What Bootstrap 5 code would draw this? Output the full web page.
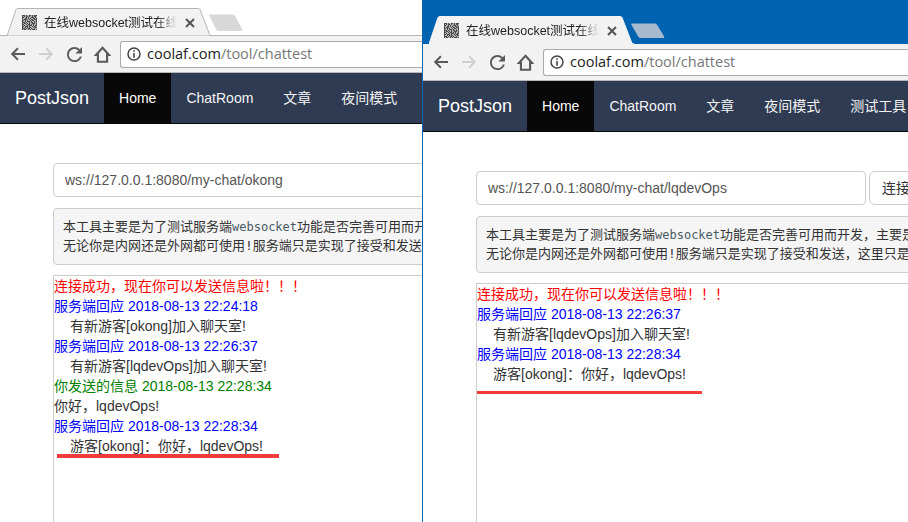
<!DOCTYPE html>
<html lang="zh-CN">
<head>
    <meta charset="UTF-8">
    <meta name="viewport" content="width=device-width, initial-scale=1.0">
    <link href="https://cdn.jsdelivr.net/npm/bootstrap@5.3.2/dist/css/bootstrap.min.css" rel="stylesheet" />
    <script src="https://cdn.jsdelivr.net/npm/bootstrap@5.3.2/dist/js/bootstrap.bundle.min.js"></script>
    <title>在线websocket测试</title>
    <style>
        html, body {
            height: 522px;
            overflow: hidden;
        }
        body {
            font-family: "Liberation Sans", "Noto Sans CJK SC", sans-serif;
            font-size: 14px;
            color: #333;
        }
        .browser-left {
            width: 422px;
            height: 522px;
            flex: none;
        }
        .browser-right {
            width: 486px;
            height: 522px;
            flex: none;
            border-left: 1px solid #0a64b0;
        }
        .tab-strip {
            height: 36px;
            background: #fff;
            border-bottom: 1px solid #b5b5b5;
            padding-left: 7px;
        }
        .browser-right .tab-strip {
            height: 44px;
            background: #0063b1;
            border-bottom: 0;
            padding-left: 6px;
        }
        .tab-item {
            width: 205px;
            height: 28px;
            margin-bottom: -1px;
        }
        .browser-right .tab-item {
            margin-bottom: 0;
        }
        .tab-shape {
            position: absolute;
            left: 0;
            top: 0;
        }
        .browser-right .tab-shape path {
            stroke: #f2f2f2;
        }
        .tab-fav {
            position: relative;
            margin-left: 15px;
            margin-top: 7px;
            width: 15px;
            height: 15px;
            flex: none;
        }
        .tab-title {
            position: relative;
            margin-left: 7px;
            margin-top: 5px;
            width: 133px;
            height: 20px;
            font-size: 12.5px;
            line-height: 20px;
            color: #222;
            white-space: nowrap;
            overflow: hidden;
            -webkit-mask-image: linear-gradient(to right, #000 85%, transparent 100%);
            mask-image: linear-gradient(to right, #000 85%, transparent 100%);
        }
        .tab-close {
            position: relative;
            margin-left: 8px;
            margin-top: 10px;
            flex: none;
        }
        .tab-new {
            margin-left: -3px;
            margin-bottom: 3px;
            flex: none;
        }
        .browser-right .tab-new {
            height: 16px;
            margin-bottom: 5px;
        }
        .browser-right .tab-new path {
            fill: #a5b9cf;
        }
        .tool-bar {
            height: 37px;
            background: #f2f2f2;
            border-bottom: 1px solid #b8b8b8;
            padding-left: 4px;
        }
        .tool-btn {
            width: 28px;
            height: 36px;
            flex: none;
            color: #5a5a5a;
        }
        .tool-btn.is-off {
            color: #cfcfcf;
        }
        .omni-box {
            margin-left: 4px;
            height: 27px;
            flex: 1 0 auto;
            background: #fff;
            border: 1px solid #a9a9a9;
            border-right: 0;
            border-radius: 3px 0 0 3px;
            font-family: "Open Sans", "Liberation Sans", sans-serif;
            font-size: 14.5px;
            color: #222;
            padding-left: 6px;
            white-space: nowrap;
        }
        .omni-box svg {
            margin-right: 6px;
            flex: none;
        }
        .omni-path {
            color: #777;
        }
        .site-nav.navbar {
            height: 51px;
            padding: 0;
            background: #2f3b52;
            border-bottom: 1px solid #080808;
            flex-wrap: nowrap;
            justify-content: flex-start;
        }
        .site-nav .navbar-brand {
            font-size: 18px;
            line-height: 20px;
            color: #fff;
            padding: 15px;
            margin: 0;
        }
        .site-nav .navbar-nav {
            flex-wrap: nowrap;
        }
        .site-nav .nav-link {
            font-size: 14px;
            line-height: 20px;
            padding: 15px !important;
            color: #f4f4f4;
            white-space: nowrap;
        }
        .site-nav .nav-link.active {
            background: #080808;
            color: #fff;
        }
        .tool-body {
            width: 486px;
            padding: 39px 0 0 53px;
        }
        .url-row {
            gap: 3px;
            margin-bottom: 11px;
        }
        .url-input.form-control {
            width: 390px;
            height: 34px;
            flex: none;
            font-family: inherit;
            font-size: 14px;
            color: #555;
            padding: 6px 11px;
            border-color: #ccc;
            border-radius: 4px;
        }
        .conn-btn.btn {
            flex: none;
            height: 34px;
            font-size: 14px;
            color: #333;
            background: #fff;
            border-color: #ccc;
            padding: 6px 12px;
            white-space: nowrap;
        }
        .tool-note {
            width: 640px;
            height: 57px;
            margin: 0 0 10px;
            padding: 8px 9px;
            font-family: "DejaVu Sans Mono", "Noto Sans CJK SC", monospace;
            font-size: 13px;
            line-height: 19px;
            color: #333;
            background: #f5f5f5;
            border: 1px solid #ccc;
            border-radius: 4px;
            overflow: hidden;
            white-space: pre;
        }
        .tool-note code {
            font-family: "DejaVu Sans Mono", monospace;
            font-size: 12px;
            line-height: 1;
            color: #4a5a66;
        }
        .chat-log {
            position: relative;
            width: 640px;
            height: 300px;
            border-top: 1px solid #ccc;
            border-left: 1px solid #ccc;
        }
        .chat-line {
            line-height: 20px;
            height: 20px;
            white-space: nowrap;
        }
        .chat-indent {
            padding-left: 16px;
        }
        .chat-ok { color: #f00; }
        .chat-server { color: #00f; }
        .chat-self { color: #008000; }
        .mark-line {
            position: absolute;
            height: 4px;
            background: #f23c3c;
        }
        .mark-left {
            left: 3px;
            width: 222px;
            top: 178px;
        }
        .mark-right {
            left: 0;
            width: 225px;
            top: 107px;
            height: 3px;
        }
    </style>
</head>
<body>
    <svg width="0" height="0" class="position-absolute">
        <symbol id="i-back" viewBox="0 0 16 16"><path fill="currentColor" d="M15 7H4.600l4-4L7.200 1.600 .8 8l6.400 6.400L8.600 13l-4-4H15z"/></symbol>
        <symbol id="i-forward" viewBox="0 0 16 16"><path fill="currentColor" d="M1 7h10.400l-4-4 1.400-1.400L15.200 8l-6.400 6.400L7.400 13l4-4H1z"/></symbol>
        <symbol id="i-reload" viewBox="4 4 16 16"><path fill="currentColor" d="M17.650 6.350A7.960 7.960 0 0 0 12 4c-4.420 0-7.990 3.580-7.990 8s3.570 8 7.990 8c3.730 0 6.840-2.550 7.730-6h-2.080A5.990 5.990 0 0 1 12 18c-3.310 0-6-2.690-6-6s2.690-6 6-6c1.660 0 3.140.69 4.220 1.780L13 11h7V4z"/></symbol>
        <symbol id="i-home" viewBox="0 0 16 16"><path fill="none" stroke="currentColor" stroke-width="2" stroke-linejoin="miter" d="M8 1.700 14 8.300H12.300V14.800H3.700V8.300H2Z"/></symbol>
        <symbol id="i-info" viewBox="0 0 14 14"><circle cx="7" cy="7" r="6" fill="none" stroke="#444" stroke-width="1.500"/><path fill="#444" d="M6.200 3.200h1.600v1.600H6.200zM6.200 6h1.600v4.800H6.200z"/></symbol>
        <symbol id="i-fav" viewBox="0 0 15 15">
            <rect width="15" height="15" fill="#b4b4b4"/>
            <g fill="none" stroke="#4c4c4c">
                <path d="M0 .5h15" stroke-dasharray="3 1 1 2 2 1 1 1 3"/>
                <path d="M0 1.500h15" stroke-dasharray="1 1 1 1 2 1 1 2 1 1 2"/>
                <path d="M0 2.500h15" stroke-dasharray="2 2 1 1 1 2 3 1 1"/>
                <path d="M0 3.500h15" stroke-dasharray="1 2 2 1 1 1 1 2 2 1 1"/>
                <path d="M0 4.500h15" stroke-dasharray="1 1 3 2 1 1 2 1 3"/>
                <path d="M0 5.500h15" stroke-dasharray="2 1 1 1 1 2 1 1 2 2 1"/>
                <path d="M0 6.500h15" stroke-dasharray="1 2 1 1 3 1 1 2 1 1 1"/>
                <path d="M0 7.500h15" stroke-dasharray="3 1 1 2 1 1 2 1 1 1 1"/>
                <path d="M0 8.500h15" stroke-dasharray="1 1 2 1 1 1 1 2 3 1 1"/>
                <path d="M0 9.500h15" stroke-dasharray="2 2 1 1 2 1 1 1 1 2 1"/>
                <path d="M0 10.500h15" stroke-dasharray="1 1 1 2 1 1 3 1 1 1 2"/>
                <path d="M0 11.500h15" stroke-dasharray="2 1 3 1 1 2 1 1 2 1"/>
                <path d="M0 12.500h15" stroke-dasharray="1 2 1 1 1 1 2 2 1 1 2"/>
                <path d="M0 13.500h15" stroke-dasharray="3 1 1 1 2 1 1 2 1 2"/>
                <path d="M0 14.500h15" stroke-dasharray="1 1 2 2 1 1 1 1 3 1 1"/>
            </g>
        </symbol>
    </svg>

    <div class="d-flex">
        <!-- okong window -->
        <div class="browser-left overflow-hidden">
            <div class="tab-strip d-flex align-items-end">
                <div class="tab-item position-relative d-flex">
                    <svg class="tab-shape" width="205" height="28"><path d="M0 28 9 1.500Q9.500 .5 11 .5H191Q192.500 .5 193 1.500L203 27.500 205 28Z" fill="#f2f2f2" stroke="#b5b5b5"/></svg>
                    <svg class="tab-fav"><use href="#i-fav"/></svg>
                    <div class="tab-title">在线websocket测试在线</div>
                    <svg class="tab-close" width="10" height="10"><path d="M1 1l8 8M9 1 1 9" stroke="#555" stroke-width="2"/></svg>
                </div>
                <svg class="tab-new" width="36" height="18" viewBox="0 0 36 18" preserveAspectRatio="none"><path d="M0 1Q0 .5 1 .5H24Q25 .5 26 2L33 15Q34 17 32 17H9Q8 17 7 15Z" fill="#d8d8d8"/></svg>
            </div>
            <div class="tool-bar d-flex align-items-center">
                <div class="tool-btn d-flex align-items-center justify-content-center"><svg width="16" height="16"><use href="#i-back"/></svg></div>
                <div class="tool-btn is-off d-flex align-items-center justify-content-center"><svg width="16" height="16"><use href="#i-forward"/></svg></div>
                <div class="tool-btn d-flex align-items-center justify-content-center"><svg width="15" height="15"><use href="#i-reload"/></svg></div>
                <div class="tool-btn d-flex align-items-center justify-content-center"><svg width="17" height="17"><use href="#i-home"/></svg></div>
                <div class="omni-box d-flex align-items-center"><svg width="14" height="14"><use href="#i-info"/></svg><span>coolaf.com<span class="omni-path">/tool/chattest</span></span></div>
            </div>
            <nav class="site-nav navbar navbar-expand navbar-dark">
                <a class="navbar-brand" href="#">PostJson</a>
                <ul class="navbar-nav">
                    <li class="nav-item"><a class="nav-link active" href="#">Home</a></li>
                    <li class="nav-item"><a class="nav-link" href="#">ChatRoom</a></li>
                    <li class="nav-item"><a class="nav-link" href="#">文章</a></li>
                    <li class="nav-item"><a class="nav-link" href="#">夜间模式</a></li>
                    <li class="nav-item"><a class="nav-link" href="#">测试工具</a></li>
                </ul>
            </nav>
            <div class="tool-body">
                <div class="url-row d-flex">
                    <input class="url-input form-control" type="text" value="ws://127.0.0.1:8080/my-chat/okong">
                    <button class="conn-btn btn" type="button">连接</button>
                </div>
                <div class="tool-note">本工具主要是为了测试服务端<code>websocket</code>功能是否完善可用而开发，主要是
无论你是内网还是外网都可使用!服务端只是实现了接受和发送，这里只是</div>
                <div class="chat-log">
                    <div class="chat-line chat-ok">连接成功，现在你可以发送信息啦！！！</div>
                    <div class="chat-line chat-server">服务端回应 2018-08-13 22:24:18</div>
                    <div class="chat-line chat-indent">有新游客[okong]加入聊天室!</div>
                    <div class="chat-line chat-server">服务端回应 2018-08-13 22:26:37</div>
                    <div class="chat-line chat-indent">有新游客[lqdevOps]加入聊天室!</div>
                    <div class="chat-line chat-self">你发送的信息 2018-08-13 22:28:34</div>
                    <div class="chat-line">你好，lqdevOps!</div>
                    <div class="chat-line chat-server">服务端回应 2018-08-13 22:28:34</div>
                    <div class="chat-line chat-indent">游客[okong]：你好，lqdevOps!</div>
                    <div class="mark-line mark-left"></div>
                </div>
            </div>
        </div>

        <!-- lqdevOps window -->
        <div class="browser-right overflow-hidden">
            <div class="tab-strip d-flex align-items-end">
                <div class="tab-item position-relative d-flex">
                    <svg class="tab-shape" width="205" height="28"><path d="M0 28 9 1.500Q9.500 .5 11 .5H191Q192.500 .5 193 1.500L203 27.500 205 28Z" fill="#f2f2f2" stroke="#b5b5b5"/></svg>
                    <svg class="tab-fav"><use href="#i-fav"/></svg>
                    <div class="tab-title">在线websocket测试在线</div>
                    <svg class="tab-close" width="10" height="10"><path d="M1 1l8 8M9 1 1 9" stroke="#555" stroke-width="2"/></svg>
                </div>
                <svg class="tab-new" width="36" height="18" viewBox="0 0 36 18" preserveAspectRatio="none"><path d="M0 1Q0 .5 1 .5H24Q25 .5 26 2L33 15Q34 17 32 17H9Q8 17 7 15Z" fill="#d8d8d8"/></svg>
            </div>
            <div class="tool-bar d-flex align-items-center">
                <div class="tool-btn d-flex align-items-center justify-content-center"><svg width="16" height="16"><use href="#i-back"/></svg></div>
                <div class="tool-btn is-off d-flex align-items-center justify-content-center"><svg width="16" height="16"><use href="#i-forward"/></svg></div>
                <div class="tool-btn d-flex align-items-center justify-content-center"><svg width="15" height="15"><use href="#i-reload"/></svg></div>
                <div class="tool-btn d-flex align-items-center justify-content-center"><svg width="17" height="17"><use href="#i-home"/></svg></div>
                <div class="omni-box d-flex align-items-center"><svg width="14" height="14"><use href="#i-info"/></svg><span>coolaf.com<span class="omni-path">/tool/chattest</span></span></div>
            </div>
            <nav class="site-nav navbar navbar-expand navbar-dark">
                <a class="navbar-brand" href="#">PostJson</a>
                <ul class="navbar-nav">
                    <li class="nav-item"><a class="nav-link active" href="#">Home</a></li>
                    <li class="nav-item"><a class="nav-link" href="#">ChatRoom</a></li>
                    <li class="nav-item"><a class="nav-link" href="#">文章</a></li>
                    <li class="nav-item"><a class="nav-link" href="#">夜间模式</a></li>
                    <li class="nav-item"><a class="nav-link" href="#">测试工具</a></li>
                </ul>
            </nav>
            <div class="tool-body">
                <div class="url-row d-flex">
                    <input class="url-input form-control" type="text" value="ws://127.0.0.1:8080/my-chat/lqdevOps">
                    <button class="conn-btn btn" type="button">连接</button>
                </div>
                <div class="tool-note">本工具主要是为了测试服务端<code>websocket</code>功能是否完善可用而开发，主要是
无论你是内网还是外网都可使用!服务端只是实现了接受和发送，这里只是</div>
                <div class="chat-log">
                    <div class="chat-line chat-ok">连接成功，现在你可以发送信息啦！！！</div>
                    <div class="chat-line chat-server">服务端回应 2018-08-13 22:26:37</div>
                    <div class="chat-line chat-indent">有新游客[lqdevOps]加入聊天室!</div>
                    <div class="chat-line chat-server">服务端回应 2018-08-13 22:28:34</div>
                    <div class="chat-line chat-indent">游客[okong]：你好，lqdevOps!</div>
                    <div class="mark-line mark-right"></div>
                </div>
            </div>
        </div>
    </div>
</body>
</html>
